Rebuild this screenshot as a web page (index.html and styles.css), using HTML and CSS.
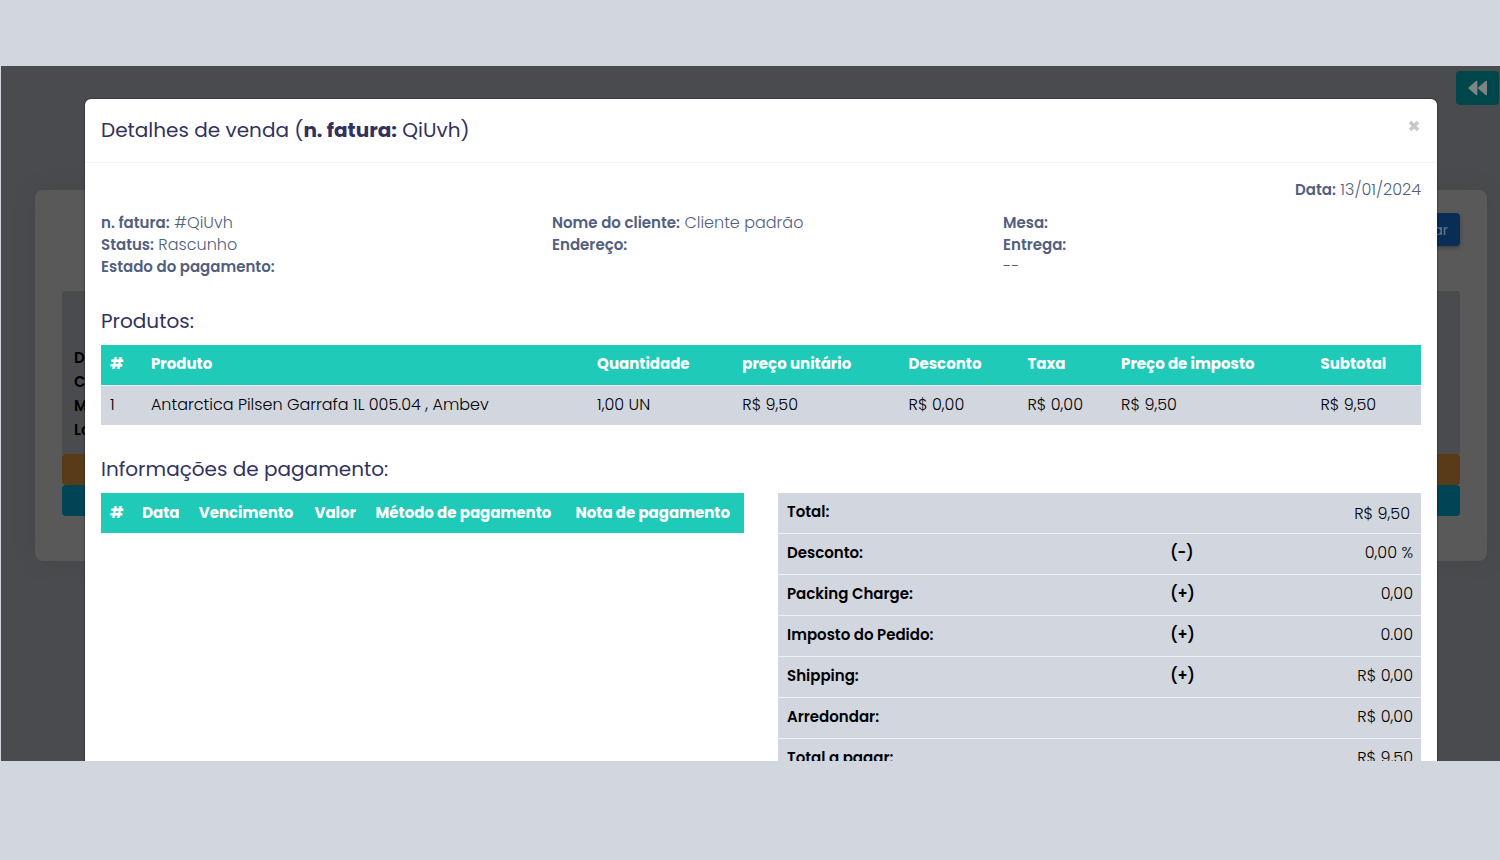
FILE: index.html
```html
<!DOCTYPE html>
<html lang="pt-BR">
<head>
<meta charset="utf-8">
<title>Detalhes de venda</title>
<link rel="stylesheet" href="styles.css">
</head>
<body>
<div class="stage">
  <div class="page">
    <div class="toolbar">
      <button class="back" type="button" aria-label="Voltar">
        <svg viewBox="0 0 20 16" width="20" height="16" aria-hidden="true"><path d="M9.4 1.6v12.8c0 .8-.8 1.1-1.4.6L.8 8.8c-.5-.4-.5-1.2 0-1.6L8 1c.6-.5 1.4-.2 1.4.6zM19 1.6v12.8c0 .8-.8 1.1-1.4.6l-7.2-6.2c-.5-.4-.5-1.2 0-1.6L17.6 1c.6-.5 1.4-.2 1.4.6z"/></svg>
      </button>
    </div>
    <section class="card">
      <div class="card-actions"><button class="primary" type="button">Voltar</button></div>
      <div class="order">
        <p>Data</p><p>Cliente</p><p>Mesa</p><p>Local</p>
      </div>
      <div class="bar bar-orange"></div>
      <div class="bar bar-teal"></div>
    </section>
  </div>
  <div class="overlay">
    <div class="modal" role="dialog" aria-labelledby="title">
      <header class="modal-header">
        <h1 class="title" id="title">Detalhes de venda (<b>n. fatura:</b> QiUvh)</h1>
        <button class="close" type="button" aria-label="Fechar">
          <svg viewBox="0 0 12 12" width="12" height="12" aria-hidden="true"><path d="M2 2l8 8M10 2l-8 8"/></svg>
        </button>
      </header>
      <div class="modal-body">
        <p class="date"><b>Data:</b> 13/01/2024</p>
        <div class="info">
          <div>
            <p><b>n. fatura:</b> #QiUvh</p>
            <p><b>Status:</b> Rascunho</p>
            <p><b>Estado do pagamento:</b></p>
          </div>
          <div>
            <p><b>Nome do cliente:</b> Cliente padrão</p>
            <p><b>Endereço:</b></p>
          </div>
          <div>
            <p><b>Mesa:</b></p>
            <p><b>Entrega:</b></p>
            <p>--</p>
          </div>
        </div>
        <h2 class="heading">Produtos:</h2>
        <table class="table products">
          <colgroup><col class="p-num"><col class="p-name"><col class="p-qty"><col class="p-unit"><col class="p-disc"><col class="p-tax"><col class="p-price"><col class="p-sub"></colgroup>
          <thead><tr><th>#</th><th>Produto</th><th>Quantidade</th><th>preço unitário</th><th>Desconto</th><th>Taxa</th><th>Preço de imposto</th><th>Subtotal</th></tr></thead>
          <tbody><tr><td>1</td><td>Antarctica Pilsen Garrafa 1L 005.04 , Ambev</td><td>1,00 UN</td><td>R$ 9,50</td><td>R$ 0,00</td><td>R$ 0,00</td><td>R$ 9,50</td><td>R$ 9,50</td></tr></tbody>
        </table>
        <h2 class="heading">Informações de pagamento:</h2>
        <div class="split">
          <div>
            <table class="table payments">
              <colgroup><col class="y-num"><col class="y-date"><col class="y-due"><col class="y-value"><col class="y-method"><col class="y-note"></colgroup>
              <thead><tr><th>#</th><th>Data</th><th>Vencimento</th><th>Valor</th><th>Método de pagamento</th><th>Nota de pagamento</th></tr></thead>
            </table>
          </div>
          <div>
            <table class="table totals">
              <colgroup><col class="t-label"><col class="t-sign"><col></colgroup>
              <tbody>
                <tr><th scope="row">Total:</th><td></td><td class="amount grand">R$ 9,50</td></tr>
                <tr><th scope="row">Desconto:</th><td class="sign">(-)</td><td class="amount">0,00 %</td></tr>
                <tr><th scope="row">Packing Charge:</th><td class="sign">(+)</td><td class="amount">0,00</td></tr>
                <tr><th scope="row">Imposto do Pedido:</th><td class="sign">(+)</td><td class="amount">0.00</td></tr>
                <tr><th scope="row">Shipping:</th><td class="sign">(+)</td><td class="amount">R$ 0,00</td></tr>
                <tr><th scope="row">Arredondar:</th><td></td><td class="amount">R$ 0,00</td></tr>
                <tr><th scope="row">Total a pagar:</th><td></td><td class="amount">R$ 9,50</td></tr>
              </tbody>
            </table>
          </div>
        </div>
      </div>
    </div>
  </div>
</div>
</body>
</html>
```
FILE: styles.css
```css
* { box-sizing: border-box; }
body {
  margin: 0;
  height: 100vh;
  padding: 66px 0 99px 1px;
  background: #d2d6df;
  font-family: Poppins, Inter, "Open Sans", sans-serif;
  font-size: 15px;
  line-height: 22px;
  color: #525f80;
}
p, h1, h2 { margin: 0; }
button { font: inherit; border: 0; padding: 0; }
.stage { position: relative; height: 100%; overflow: hidden; background: #4a4b4e; }
.toolbar { display: flex; justify-content: flex-end; padding: 5px 1px 0; }
.back {
  display: flex; align-items: center; justify-content: center;
  width: 43px; height: 34px; border-radius: 4px; background: #00474b;
}
.back svg { fill: #7d8485; }
.card {
  margin: 85px 13px 0 34px; padding: 23px 27px 45px;
  border-radius: 8px; background: #595959;
  box-shadow: 0 0 20px rgba(60, 60, 60, .25);
}
.card-actions { display: flex; justify-content: flex-end; margin-bottom: 45px; }
.primary {
  height: 33px; padding: 0 12px; border-radius: 4px;
  background: #0a2d56; color: #6b7888; font-size: 14px;
  box-shadow: 0 2px 4px rgba(0, 0, 0, .3);
}
.order {
  padding: 55px 12px 12px; border-radius: 3px 3px 0 0; background: #4a4b4e;
  color: #000; font-weight: 600; line-height: 24px;
}
.bar { height: 31px; border-radius: 4px; }
.bar-orange { background: #593b19; }
.bar-teal { background: #004455; }
.overlay { position: absolute; inset: 0; padding: 33px 63px 0 84px; overflow: hidden; }
.modal { border-radius: 6px; background: #fff; box-shadow: 0 0 1px 1px rgba(0, 0, 0, .25); }
.modal-header {
  display: flex; justify-content: space-between; align-items: flex-start;
  padding: 19px 17px 20px 16px; border-bottom: 1px solid #f2f3f4;
}
.title, .heading { color: #32325d; font-size: 20px; line-height: 24px; font-weight: 400; }
.title b { font-weight: 700; }
.close { display: flex; margin-top: 2px; background: none; }
.close svg { fill: none; stroke: #c9c9c9; stroke-width: 3.6; }
.modal-body { padding: 16px; font-size: 16px; font-weight: 300; }
.modal-body b { font-size: 15px; font-weight: 600; }
.date { text-align: right; margin-bottom: 11px; }
.info { display: grid; grid-template-columns: repeat(3, 1fr); column-gap: 33px; margin-bottom: 31px; }
.heading { margin-bottom: 12px; }
.table { width: 100%; border-collapse: collapse; table-layout: fixed; color: #000; white-space: nowrap; }
.table th, .table td { height: 40px; padding: 0 9px 1px; text-align: left; }
.table th { font-size: 15px; }
.table thead th { background: #20cab9; color: #fff; font-weight: 700; }
.table tbody th, .table tbody td { background: #d2d6df; }
.table tbody th, .sign { font-weight: 600; font-size: 15px; }
.products { margin-bottom: 32px; }
.table.products tbody td { padding-bottom: 0; border-top: 1px solid #eff1f4; }
.p-num { width: 3.1%; } .p-name { width: 33.8%; } .p-qty { width: 11%; } .p-unit { width: 12.6%; }
.p-disc { width: 9%; } .p-tax { width: 7.1%; } .p-price { width: 15.1%; } .p-sub { width: 8.3%; }
.y-num { width: 5%; } .y-date { width: 8.8%; } .y-due { width: 18%; } .y-value { width: 9.5%; }
.y-method { width: 31.1%; } .y-note { width: 27.6%; }
.split { display: grid; grid-template-columns: 1fr 1fr; column-gap: 34px; }
.totals tr + tr > * { height: 41px; padding-bottom: 2px; border-top: 1px solid #eff1f4; }
.t-label { width: 59.6%; } .t-sign { width: 8%; }
.totals .amount { text-align: right; padding-right: 8px; }
.totals .grand { padding: 3px 11px 0 0; }
```
